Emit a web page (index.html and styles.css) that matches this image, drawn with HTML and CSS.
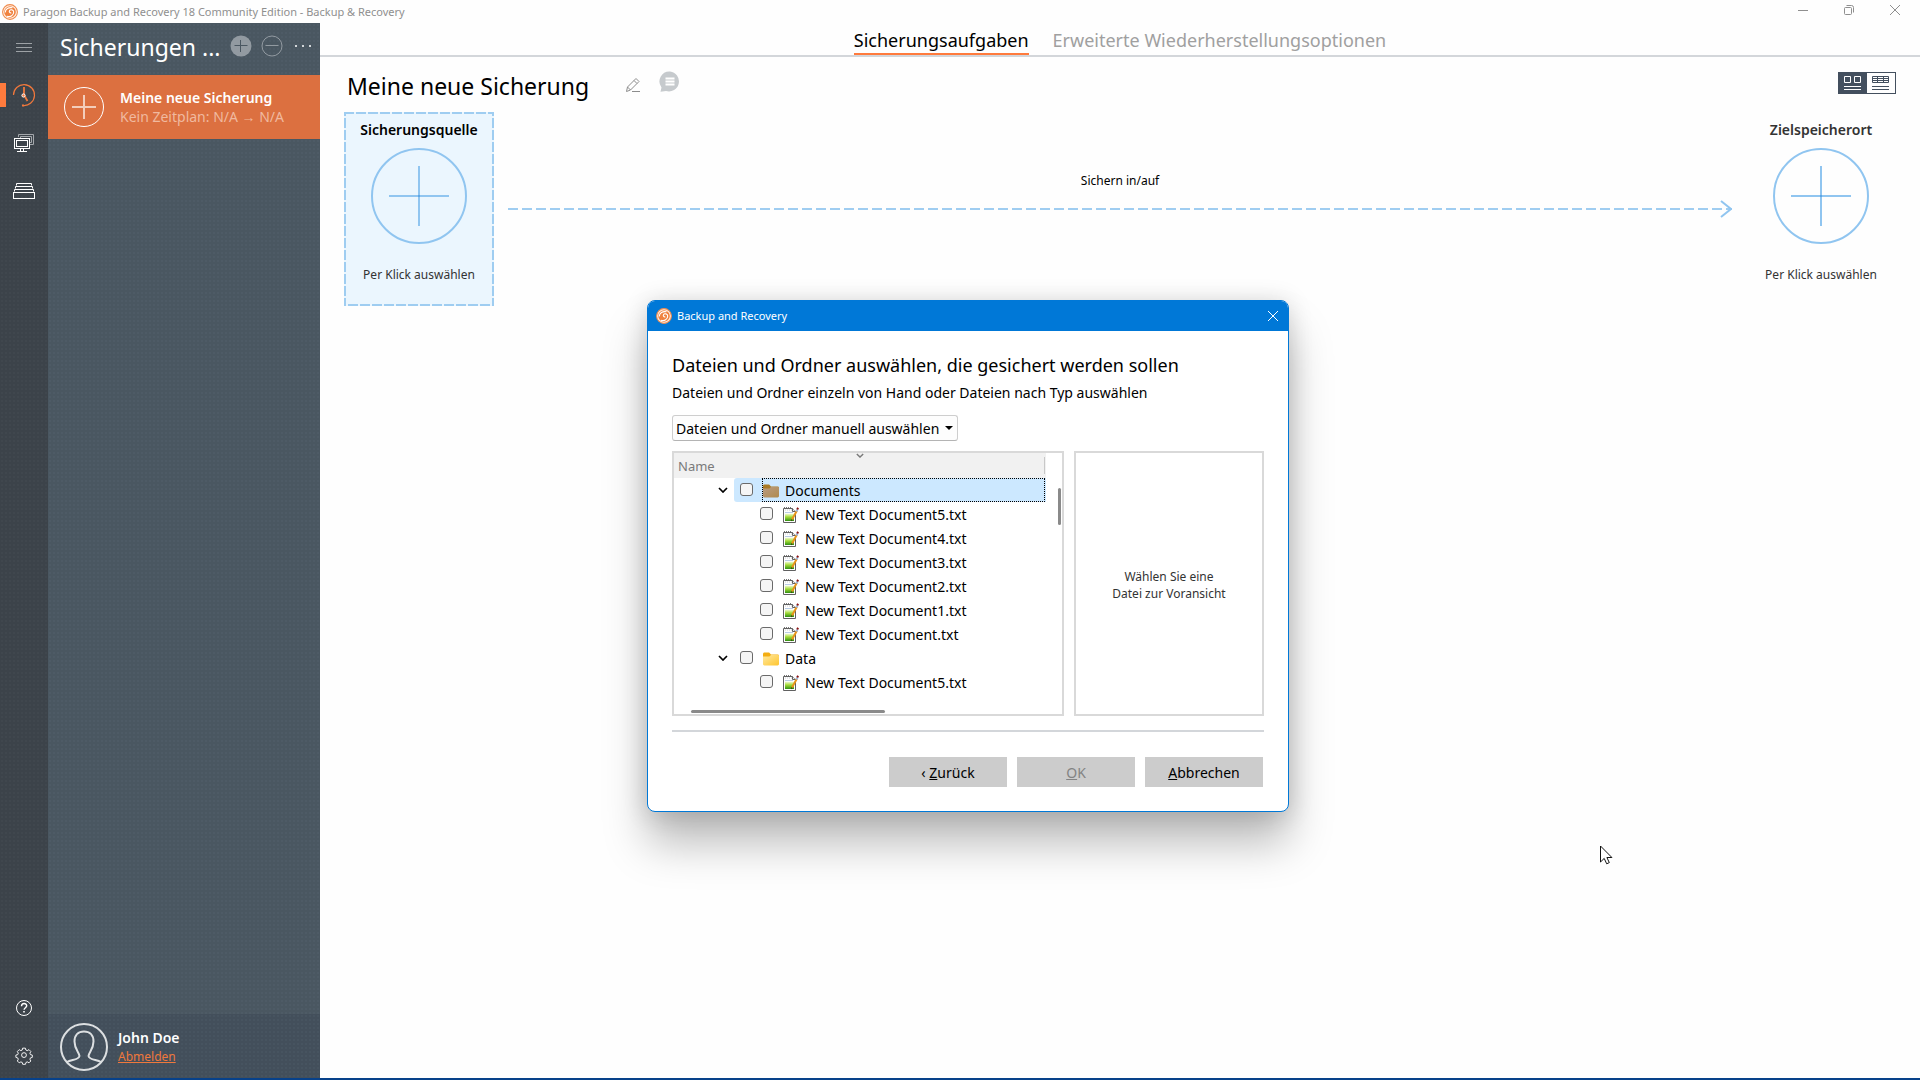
FILE: index.html
```html
<!DOCTYPE html>
<html lang="de">
<head>
    <meta charset="UTF-8">
    <meta name="viewport" content="width=device-width, initial-scale=1.0">
    <title>Paragon Backup and Recovery 18 Community Edition</title>
    <link rel="stylesheet" href="styles.css">
</head>
<body>
    <!-- Shared icons -->
    <svg class="sprite" aria-hidden="true">
        <defs>
            <linearGradient id="green" x1="0" y1="0" x2="0" y2="1">
                <stop offset="0" stop-color="#f4fbe0"/>
                <stop offset="0.45" stop-color="#a6dc3a"/>
                <stop offset="1" stop-color="#2f8f12"/>
            </linearGradient>
            <linearGradient id="yellow" x1="0" y1="0" x2="1" y2="1">
                <stop offset="0" stop-color="#ffe9a0"/>
                <stop offset="1" stop-color="#ffc52e"/>
            </linearGradient>
            <linearGradient id="brown" x1="0" y1="0" x2="1" y2="1">
                <stop offset="0" stop-color="#b99c83"/>
                <stop offset="1" stop-color="#b08a4c"/>
            </linearGradient>
        </defs>
        <symbol id="logo" viewBox="0 0 16 16">
            <circle cx="8" cy="8" r="7.4" fill="#fff3ea" stroke="#f08a4b" stroke-width="1.1"/>
            <circle cx="8" cy="8" r="5.8" fill="#f0823f"/>
            <path d="M3.200 8.500C3.400 5 6.500 3 10.500 3.800M5 12.200c3.500 1.200 6.700-.9 6.700-4.200 0-2.200-3.200-3-4.200-1.200-.7 1.400.5 2.400 1.800 1.900" fill="none" stroke="#fff" stroke-width="1.100"/>
        </symbol>
        <symbol id="doc" viewBox="0 0 16 16">
            <path d="M.5 1.500h9l3 3v11H.5z" fill="#fff" stroke="#606060"/>
            <path d="M9.500 1.500v3h3" fill="#eee" stroke="#606060"/>
            <path d="M1 .5h8" stroke="#777" stroke-dasharray="1 1"/>
            <path d="M2 3h7" stroke="#c9ccd0" stroke-dasharray="1 1"/>
            <path d="M2 5.500h8" stroke="#b9cbe6"/>
            <path d="M2 6.500h9V14H2z" fill="url(#green)"/>
            <path d="M9 12.500 14 3.500" stroke="#e8941a" stroke-width="2"/>
            <path d="m13.400 4.500 1-2" stroke="#9db6dd" stroke-width="2"/>
            <path d="m14.200 2.400.9-1.600" stroke="#8a1414" stroke-width="2"/>
            <path d="m8 14.200.4-2 1.400.8z" fill="#3b2a10"/>
        </symbol>
        <symbol id="folder" viewBox="0 0 16 14">
            <path d="M0 2.500C0 1 .6.500 1.600.500h4.500L8 2.500h6.600c1 0 1.400.6 1.400 1.400V5H0z" fill="#f3ad12"/>
            <path d="M0 4.500h6.400L8 3h6.800c.8 0 1.200.5 1.200 1.200v7.900c0 .9-.6 1.400-1.400 1.400H1.400C.6 13.500 0 13 0 12.100z" fill="url(#yellow)"/>
        </symbol>
        <symbol id="folder-sel" viewBox="0 0 16 14">
            <path d="M0 2.500C0 1 .6.500 1.600.500h4.500L8 2.500h6.600c1 0 1.400.6 1.400 1.400V5H0z" fill="#a97a26"/>
            <path d="M0 4.500h6.400L8 3h6.800c.8 0 1.200.5 1.200 1.200v7.900c0 .9-.6 1.400-1.400 1.400H1.400C.6 13.500 0 13 0 12.100z" fill="url(#brown)"/>
        </symbol>
        <symbol id="chevron" viewBox="0 0 10 6">
            <path d="m1 1 4 4 4-4" fill="none" stroke="currentColor" stroke-width="1.700"/>
        </symbol>
        <symbol id="big-plus" viewBox="0 0 96 96">
            <circle cx="48" cy="48" r="47" fill="none" stroke="#90c5f0" stroke-width="2"/>
            <path d="M48 18v60M18 48h60" stroke="#90c5f0" stroke-width="2"/>
            <path d="M47 47h2v2h-2z" fill="#5ca6e6"/>
        </symbol>
    </svg>

    <header class="titlebar">
        <svg class="logo" aria-hidden="true"><use href="#logo"/></svg>
        <span class="titlebar-text">Paragon Backup and Recovery 18 Community Edition - Backup &amp; Recovery</span>
        <div class="window-buttons">
            <button type="button" aria-label="Minimieren"><svg viewBox="0 0 12 12"><path d="M1 6.500h10"/></svg></button>
            <button type="button" aria-label="Verkleinern"><svg viewBox="0 0 12 12"><rect x="1.500" y="3.500" width="7" height="7" rx="1"/><path d="M3.500 1.500h5a2 2 0 0 1 2 2v5"/></svg></button>
            <button type="button" aria-label="Schließen"><svg viewBox="0 0 12 12"><path d="m1 1 10 10M11 1 1 11"/></svg></button>
        </div>
    </header>

    <div class="app">
        <nav class="rail">
            <button type="button" aria-label="Menü">
                <svg viewBox="0 0 24 24"><path d="M4 8.500h16M4 12.500h16M4 16.500h16" stroke="#9da2a6"/></svg>
            </button>
            <button type="button" class="active" aria-label="Sicherungen">
                <svg viewBox="0 0 24 24">
                    <path d="M1.500 12A10.500 10.500 0 1 1 11 22.500" stroke="#f0783c" stroke-width="1.200"/>
                    <path d="M12 4v8l3.500 6" stroke="#f0783c" stroke-width="1.800"/>
                    <circle cx="11.500" cy="12.500" r="1.600" fill="#f0783c"/>
                    <path d="M10 22.500h2" stroke="#f0783c" stroke-width="2"/>
                </svg>
            </button>
            <button type="button" aria-label="Computer">
                <svg viewBox="0 0 24 24">
                    <path d="M6.500 6V3.500h15v10H18" stroke="#a4a8ac"/>
                    <path d="M8.500 7V5.500h11v6H18" stroke="#a4a8ac"/>
                    <rect x="2.500" y="7.500" width="15" height="10"/>
                    <rect x="4.500" y="9.500" width="11" height="6"/>
                    <path d="M8.500 18v2M11.500 18v2M5 20.500h10"/>
                </svg>
            </button>
            <button type="button" aria-label="Archive">
                <svg viewBox="0 0 24 24">
                    <rect x="1.500" y="13.500" width="21" height="6"/>
                    <path d="M2.500 12.500v-2h19v2M3.500 9.500v-2h17v2M4.500 6.500v-2h15v2"/>
                </svg>
            </button>
            <span class="spacer"></span>
            <button type="button" aria-label="Hilfe">
                <svg viewBox="0 0 24 24">
                    <circle cx="12" cy="12" r="7.500"/>
                    <path d="M9.500 10.200c0-3.600 5.200-3.400 5.200-.4 0 1.900-2.600 1.900-2.600 4" stroke-width="1.400"/>
                    <path d="M12 15v1.600" stroke-width="1.600"/>
                </svg>
            </button>
            <button type="button" aria-label="Einstellungen">
                <svg viewBox="0 0 26 26">
                    <circle cx="13" cy="12" r="2.600"/>
                    <path d="M11.500 4.500h3l.5 2 1.500.7 1.900-1.100 2 2-1 1.900.6 1.500 2 .5v2.500l-2 .6-.6 1.400 1 1.900-2 2-1.800-1-1.500.6-.5 2h-3l-.5-2-1.500-.6-1.800 1-2-2 1-1.900-.6-1.400-2-.6v-2.500l2-.5.600-1.500-1-1.900 2-2 1.800 1.100 1.500-.7z"/>
                </svg>
            </button>
        </nav>

        <aside class="sidebar">
            <div class="sidebar-head">
                <h2>Sicherungen ...</h2>
                <button type="button" aria-label="Hinzufügen">
                    <svg viewBox="0 0 22 22"><circle cx="11" cy="11" r="10.500" fill="#929aa1"/><path d="M10.500 5v12M4.500 10.500h13" stroke="#4a5761"/></svg>
                </button>
                <button type="button" aria-label="Entfernen">
                    <svg viewBox="0 0 22 22"><circle cx="11" cy="11" r="10" fill="none" stroke="#929aa1"/><path d="M4.500 10.500h13" stroke="#929aa1"/></svg>
                </button>
                <button type="button" aria-label="Mehr">
                    <svg viewBox="0 0 22 22"><path d="M3 11h2M10 11h2M17 11h2" stroke="#d3d7da" stroke-width="2"/></svg>
                </button>
            </div>
            <button type="button" class="job">
                <svg viewBox="0 0 40 40"><circle cx="20" cy="20" r="19.500" fill="none" stroke="#fff"/><path d="M20 8v24M8 20h24" stroke="#f3cdbb" stroke-width="2"/></svg>
                <span class="job-text">
                    <strong>Meine neue Sicherung</strong>
                    <small>Kein Zeitplan: N/A → N/A</small>
                </span>
            </button>
            <div class="user">
                <svg viewBox="0 0 48 48" aria-hidden="true">
                    <circle cx="24" cy="24" r="23"/>
                    <path d="M7 39c4-2.500 12-2 12.500-6C19 29 14.500 26 14.500 18.500 14.500 12 18.500 8.500 24 8.500s9.500 3.500 9.500 10C33.500 26 29 29 28.500 33c.5 4 8.500 3.500 12.500 6"/>
                </svg>
                <div class="user-text">
                    <strong>John Doe</strong>
                    <a href="#">Abmelden</a>
                </div>
            </div>
        </aside>

        <main class="content">
            <nav class="tabs">
                <a href="#" class="current">Sicherungsaufgaben</a>
                <a href="#">Erweiterte Wiederherstellungsoptionen</a>
            </nav>

            <div class="toolbar">
                <h1>Meine neue Sicherung</h1>
                <button type="button" class="edit" aria-label="Umbenennen">
                    <svg viewBox="0 0 16 16"><path d="M1.500 14.500 2.500 10l8.500-8.500 3 3L5.500 13zM9 3.500l3 3M2.500 10 5.500 13M7 14.500h8" fill="none" stroke="#8d8d8d"/></svg>
                </button>
                <button type="button" class="comment" aria-label="Kommentar">
                    <svg viewBox="0 0 22 22"><path d="M11 .5A10 10 0 1 1 7 20l-5.500.8 1-4.300A10 10 0 0 1 11 .5z" fill="#c6cacd"/><path d="M6.500 7.500h9M6.500 10.500h9M6.500 13.500h9" stroke="#fff" stroke-width="2"/></svg>
                </button>
                <div class="view-toggle">
                    <button type="button" class="on" aria-label="Kacheln">
                        <svg viewBox="0 0 18 14"><path d="M.5.500h6v6h-6zM10.500.500h6v6h-6zM0 10.500h17M0 13.500h17"/></svg>
                    </button>
                    <button type="button" aria-label="Tabelle">
                        <svg viewBox="0 0 18 14"><path d="M.5.500h16v6H.5zM.5 2.500h16M.5 4.500h16M5.500.500v6M11.500.500v6M0 10.500h17M0 13.500h17"/></svg>
                    </button>
                </div>
            </div>

            <div class="flow">
                <button type="button" class="endpoint source">
                    <svg class="dashes" aria-hidden="true"><rect width="100%" height="100%"/></svg>
                    <strong>Sicherungsquelle</strong>
                    <svg class="big-plus" aria-hidden="true"><use href="#big-plus"/></svg>
                    <span>Per Klick auswählen</span>
                </button>
                <div class="arrow">
                    <span>Sichern in/auf</span>
                    <div class="arrow-line">
                        <i></i>
                        <svg viewBox="0 0 12 18" aria-hidden="true"><path d="m1 1 10 8-10 8"/></svg>
                    </div>
                </div>
                <button type="button" class="endpoint target">
                    <strong>Zielspeicherort</strong>
                    <svg class="big-plus" aria-hidden="true"><use href="#big-plus"/></svg>
                    <span>Per Klick auswählen</span>
                </button>
            </div>
        </main>
    </div>

    <section class="dialog" role="dialog" aria-labelledby="dialog-title">
        <div class="dialog-bar">
            <svg class="logo" aria-hidden="true"><use href="#logo"/></svg>
            <span>Backup and Recovery</span>
            <button type="button" aria-label="Schließen"><svg viewBox="0 0 12 12"><path d="m1 1 10 10M11 1 1 11"/></svg></button>
        </div>
        <div class="dialog-body">
            <h2 id="dialog-title">Dateien und Ordner auswählen, die gesichert werden sollen</h2>
            <label for="mode">Dateien und Ordner einzeln von Hand oder Dateien nach Typ auswählen</label>
            <div class="combo">
                <select id="mode">
                    <option>Dateien und Ordner manuell auswählen</option>
                </select>
            </div>
            <div class="panes">
                <div class="tree">
                    <div class="tree-head">Name<svg aria-hidden="true"><use href="#chevron"/></svg></div>
                    <ul>
                        <li class="folder selected">
                            <svg class="chevron" aria-hidden="true"><use href="#chevron"/></svg>
                            <div class="pick">
                                <input type="checkbox" id="f0">
                                <label for="f0"><svg class="folder-icon" aria-hidden="true"><use href="#folder-sel"/></svg>Documents</label>
                            </div>
                        </li>
                        <li class="file"><input type="checkbox" id="f1"><label for="f1"><svg class="doc-icon" aria-hidden="true"><use href="#doc"/></svg>New Text Document5.txt</label></li>
                        <li class="file"><input type="checkbox" id="f2"><label for="f2"><svg class="doc-icon" aria-hidden="true"><use href="#doc"/></svg>New Text Document4.txt</label></li>
                        <li class="file"><input type="checkbox" id="f3"><label for="f3"><svg class="doc-icon" aria-hidden="true"><use href="#doc"/></svg>New Text Document3.txt</label></li>
                        <li class="file"><input type="checkbox" id="f4"><label for="f4"><svg class="doc-icon" aria-hidden="true"><use href="#doc"/></svg>New Text Document2.txt</label></li>
                        <li class="file"><input type="checkbox" id="f5"><label for="f5"><svg class="doc-icon" aria-hidden="true"><use href="#doc"/></svg>New Text Document1.txt</label></li>
                        <li class="file"><input type="checkbox" id="f6"><label for="f6"><svg class="doc-icon" aria-hidden="true"><use href="#doc"/></svg>New Text Document.txt</label></li>
                        <li class="folder">
                            <svg class="chevron" aria-hidden="true"><use href="#chevron"/></svg>
                            <div class="pick">
                                <input type="checkbox" id="f7">
                                <label for="f7"><svg class="folder-icon" aria-hidden="true"><use href="#folder"/></svg>Data</label>
                            </div>
                        </li>
                        <li class="file"><input type="checkbox" id="f8"><label for="f8"><svg class="doc-icon" aria-hidden="true"><use href="#doc"/></svg>New Text Document5.txt</label></li>
                    </ul>
                    <span class="thumb-v"></span>
                    <span class="thumb-h"></span>
                </div>
                <div class="preview">Wählen Sie eine<br>Datei zur Voransicht</div>
            </div>
            <div class="dialog-buttons">
                <button type="button">‹ <u>Z</u>urück</button>
                <button type="button" disabled><u>O</u>K</button>
                <button type="button"><u>A</u>bbrechen</button>
            </div>
        </div>
    </section>

    <svg class="cursor" viewBox="0 0 14 20" aria-hidden="true"><path d="M1.500 1v16l3.700-3.600 2.500 5.400 2.600-1.200-2.400-5.100h5z"/></svg>
    <div class="desktop-edge"></div>
</body>
</html>
```
FILE: styles.css
```css
* {
    box-sizing: border-box;
}
body {
    font-family: "Noto Sans", "Open Sans", sans-serif;
    font-size: 12px;
    line-height: 16px;
    margin: 0;
    height: 100vh;
    display: flex;
    flex-direction: column;
    position: relative;
    overflow: hidden;
    background: #fefefe;
    color: #000;
}
h1, h2 {
    margin: 0;
    font-weight: 400;
}
button {
    font: inherit;
    color: inherit;
    background: none;
    border: 0;
    padding: 0;
}
svg {
    display: block;
    flex: none;
}
.sprite {
    position: absolute;
    width: 0;
    height: 0;
}
.logo {
    width: 16px;
    height: 16px;
}

/* Title bar */
.titlebar {
    display: flex;
    align-items: center;
    height: 23px;
    padding-left: 2px;
    color: #8f8f8f;
}
.titlebar-text {
    margin-left: 5px;
    font-size: 11px;
}
.window-buttons {
    display: flex;
    margin-left: auto;
    padding-right: 2px;
}
.window-buttons button {
    width: 46px;
    height: 24px;
    padding-bottom: 4px;
    display: flex;
    align-items: center;
    justify-content: center;
}
.window-buttons svg {
    width: 12px;
    height: 12px;
    fill: none;
    stroke: #8f8f8f;
}

.app {
    display: flex;
    flex: 1;
    min-height: 0;
}

/* Icon rail */
.rail {
    width: 48px;
    display: flex;
    flex-direction: column;
    background: radial-gradient(#40474e 1px, transparent 1px) 0 0 / 4px 4px #3c434a;
}
.rail button {
    height: 48px;
    display: flex;
    align-items: center;
    justify-content: center;
}
.rail button.active {
    background: linear-gradient(#ff7b3d, #ff7b3d) left center / 6px 24px no-repeat;
}
.rail svg {
    width: 24px;
    height: 24px;
    fill: none;
    stroke: #fff;
}
.spacer {
    flex: 1;
}

/* Sidebar */
.sidebar {
    width: 272px;
    display: flex;
    flex-direction: column;
    color: #fff;
    background: radial-gradient(#4e5b66 1px, transparent 1px) 0 0 / 4px 4px #4a5761;
}
.sidebar-head {
    display: flex;
    align-items: center;
    height: 52px;
    padding: 0 7px 6px 12px;
}
.sidebar-head h2 {
    flex: 1;
    font-size: 23px;
    line-height: 28px;
    padding-top: 2px;
    white-space: nowrap;
}
.sidebar-head button {
    margin-left: 9px;
}
.sidebar-head svg {
    width: 22px;
    height: 22px;
}
.job {
    display: flex;
    align-items: center;
    height: 64px;
    padding: 0 16px;
    gap: 16px;
    text-align: left;
    background: #dc7040;
}
.job svg {
    width: 40px;
    height: 40px;
}
.job-text strong, .job-text small {
    display: block;
    font-size: 14px;
    line-height: 19px;
    white-space: nowrap;
}
.job-text strong {
    font-weight: 600;
}
.job-text small {
    color: #f0b99f;
}
.user {
    display: flex;
    align-items: center;
    gap: 10px;
    height: 66px;
    margin-top: auto;
    padding: 0 12px;
    background: radial-gradient(#475460 1px, transparent 1px) 0 0 / 4px 4px #434f5b;
}
.user svg {
    width: 48px;
    height: 48px;
    fill: none;
    stroke: #dcdfe1;
    stroke-width: 2px;
}
.user-text strong, .user-text a {
    display: block;
    line-height: 19px;
}
.user-text strong {
    font-size: 14px;
    font-weight: 600;
}
.user-text a {
    color: #f0783c;
    font-size: 12px;
}

/* Main area */
.content {
    flex: 1;
    min-width: 0;
}
.tabs {
    display: flex;
    justify-content: center;
    gap: 24px;
    height: 34px;
    border-bottom: 2px solid #d3d6da;
}
.tabs a {
    font-size: 18px;
    line-height: 34px;
    height: 32px;
    color: #a0a0a0;
    text-decoration: none;
}
.tabs .current {
    color: #000;
    border-bottom: 2px solid #ff7b3d;
}
.toolbar {
    display: flex;
    align-items: center;
    height: 55px;
    padding: 0 24px 0 27px;
}
.toolbar h1 {
    font-size: 23px;
    line-height: 32px;
    padding-top: 2px;
}
.toolbar .edit {
    margin-left: 36px;
}
.toolbar .comment {
    margin: 0 0 6px 18px;
}
.edit svg {
    width: 16px;
    height: 16px;
}
.comment svg {
    width: 22px;
    height: 22px;
}
.view-toggle {
    display: flex;
    margin: 0 0 4px auto;
    border: 1px solid #434f5e;
}
.view-toggle button {
    padding: 3px 5px;
}
.view-toggle .on {
    background: #434f5e;
}
.view-toggle svg {
    width: 18px;
    height: 14px;
    overflow: visible;
    fill: none;
    stroke: #434f5e;
}
.view-toggle .on svg {
    stroke: #fff;
}
.flow {
    display: flex;
    padding: 0 24px;
}
.endpoint {
    position: relative;
    width: 150px;
    height: 194px;
    display: flex;
    flex-direction: column;
    align-items: center;
    padding-top: 8px;
    color: #333;
}
.source {
    background: #ebf6fe;
}
.dashes {
    position: absolute;
    top: 0;
    left: 0;
    width: 100%;
    height: 100%;
}
.dashes rect {
    fill: none;
    stroke: #9fcdf1;
    stroke-width: 4px;
    stroke-dasharray: 10 2;
}
.endpoint strong {
    font-size: 14px;
    line-height: 20px;
    font-weight: 600;
}
.source strong {
    color: #000;
}
.big-plus {
    width: 96px;
    height: 96px;
    margin: 8px 0 23px;
}
.arrow {
    flex: 1;
    padding: 61px 14px 0;
    text-align: center;
}
.arrow-line {
    display: flex;
    align-items: center;
    margin-top: 11px;
}
.arrow-line i {
    flex: 1;
    height: 2px;
    margin-right: -12px;
    background: repeating-linear-gradient(90deg, #9fcdf1 0 10px, transparent 10px 14px);
}
.arrow-line svg {
    width: 12px;
    height: 18px;
    fill: none;
    stroke: #90c5f0;
    stroke-width: 2px;
}

/* Dialog window */
.dialog {
    position: absolute;
    top: 300px;
    left: 647px;
    width: 642px;
    border: 1px solid #0078d7;
    border-radius: 8px;
    background: #fff;
    overflow: hidden;
    box-shadow: 0 32px 44px rgba(0, 0, 0, 0.26), 0 2px 24px rgba(0, 0, 0, 0.16);
}
.dialog-bar {
    display: flex;
    align-items: center;
    height: 30px;
    padding: 0 9px 0 8px;
    gap: 5px;
    color: #fff;
    font-size: 11px;
    background: #0078d7;
}
.dialog-bar button {
    margin-left: auto;
}
.dialog-bar button svg {
    width: 12px;
    height: 12px;
    stroke: #fff;
}
.dialog-body {
    padding: 20px 24px 24px;
}
.dialog-body h2 {
    font-size: 18px;
    line-height: 28px;
}
.dialog-body > label {
    display: block;
    margin-top: 4px;
    font-size: 14px;
    line-height: 20px;
}
.combo {
    position: relative;
    width: 286px;
    margin: 12px 0 10px;
}
.combo select {
    appearance: none;
    display: block;
    width: 100%;
    height: 26px;
    padding: 1px 3px 0;
    border: 1px solid #cecece;
    border-bottom-color: #b4b4b4;
    border-radius: 3px;
    background: #fdfdfd;
    color: #000;
    font: inherit;
    font-size: 14px;
}
.combo::after {
    content: "";
    position: absolute;
    top: 11px;
    right: 5px;
    border: 4px solid transparent;
    border-top-color: #000;
    border-bottom: 0;
}
.panes {
    display: flex;
    gap: 10px;
    height: 265px;
}
.tree, .preview {
    border: 2px solid #d9d9d9;
}
.tree {
    position: relative;
    flex: 1;
    padding-right: 16px;
}
.tree-head {
    position: relative;
    height: 25px;
    padding: 5px 4px 0;
    font-size: 13px;
    color: #7a7a7a;
    background: linear-gradient(#c8c8c8, #c8c8c8) right 1px center / 1px 17px no-repeat #f1f1f1;
}
.tree-head svg {
    position: absolute;
    top: 0;
    left: 49%;
    width: 8px;
    height: 5px;
}
.tree ul {
    margin: 0;
    padding: 0;
    list-style: none;
    font-size: 14px;
}
.tree li {
    display: flex;
    align-items: center;
    height: 24px;
}
.folder {
    padding-left: 44px;
}
.chevron {
    width: 10px;
    height: 6px;
    margin-right: 6px;
}
.pick {
    display: flex;
    flex: 1;
    align-items: center;
    height: 24px;
    padding-left: 6px;
    border-radius: 3px 0 0 3px;
}
.selected .pick {
    background: #cce8ff;
}
.pick label {
    flex: 1;
    margin: 0 1px 0 9px;
    border: 1px dotted transparent;
}
.selected label {
    border-color: #000;
}
.folder-icon {
    width: 16px;
    height: 14px;
    margin-right: 6px;
}
.file {
    padding-left: 86px;
}
.tree label {
    display: flex;
    align-items: center;
    height: 24px;
    padding-top: 1px;
}
.file label {
    margin-left: 10px;
}
.doc-icon {
    width: 16px;
    height: 16px;
    margin-right: 6px;
}
.tree input {
    appearance: none;
    width: 13px;
    height: 13px;
    margin: 0 0 2px;
    border: 1px solid #6a6a6a;
    border-radius: 3px;
    background: #f5f5f5;
}
.thumb-v, .thumb-h {
    position: absolute;
    border-radius: 2px;
    background: #8a8a8a;
}
.thumb-v {
    top: 35px;
    right: 1px;
    width: 3px;
    height: 37px;
}
.thumb-h {
    left: 17px;
    bottom: 1px;
    width: 194px;
    height: 3px;
}
.preview {
    width: 190px;
    display: flex;
    align-items: center;
    justify-content: center;
    padding-top: 2px;
    text-align: center;
    line-height: 17px;
    color: #333;
}
.dialog-buttons {
    display: flex;
    justify-content: flex-end;
    gap: 10px;
    margin-top: 14px;
    padding: 25px 1px 0;
    border-top: 2px solid #d3d6da;
}
.dialog-buttons button {
    width: 118px;
    height: 30px;
    padding-top: 2px;
    font-size: 14px;
    background: #ccc;
}
.dialog-buttons button:disabled {
    color: #838383;
}

.cursor {
    position: absolute;
    top: 845px;
    left: 1599px;
    width: 14px;
    height: 20px;
    fill: #fff;
    stroke: #111;
}
.desktop-edge {
    position: absolute;
    left: 0;
    right: 0;
    bottom: 0;
    height: 2px;
    background: #07418a;
}
```
